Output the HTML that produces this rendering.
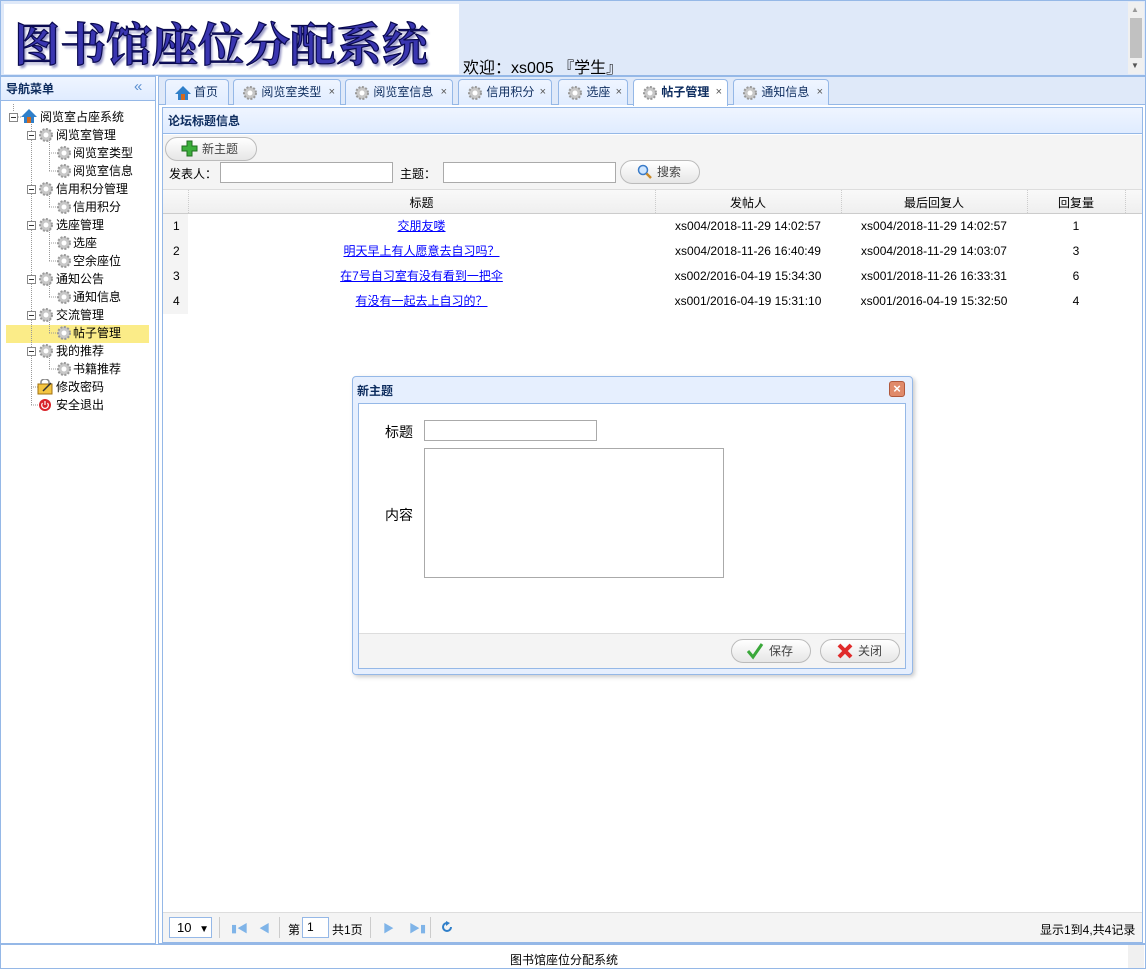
<!DOCTYPE html>
<html><head><meta charset="utf-8"><style>
*{margin:0;padding:0;box-sizing:border-box}
body{width:1146px;height:969px;position:relative;overflow:hidden;background:#fff;font-family:"Liberation Sans","Microsoft YaHei","Noto Sans CJK SC",sans-serif;font-size:12px;color:#000}
.a{position:absolute}
.gear{display:inline-block;width:16px;height:16px;vertical-align:middle}
.tab{position:absolute;top:79px;height:26px;border:1px solid #95b8e7;border-bottom:none;border-radius:4px 4px 0 0;background:linear-gradient(#eff5ff,#e0ecff);line-height:24px;padding-left:8px;color:#0e2d5f;font-size:12px}
.tab .x{position:absolute;right:5px;top:0;color:#555;font-size:11px}
.row{position:absolute;left:164px;width:962px;height:25px;line-height:25px}
.btn{position:absolute;height:24px;border:1px solid #bbb;border-radius:12px;background:linear-gradient(#fff,#e6e6e6);line-height:22px;color:#444}
.bx{position:absolute;width:9px;height:9px;border:1px solid #888;background:linear-gradient(#333,#333) center/5px 1px no-repeat #fff}
.tr{position:absolute;line-height:18px;white-space:nowrap}
</style></head><body>
<!-- header -->
<div class="a" style="left:0;top:0;width:1146px;height:76px;background:#dfe9f9;border:1px solid #95b8e7"></div>
<div class="a" style="left:4px;top:4px;width:455px;height:70px;background:#fff"></div>
<div class="a" style="left:14px;top:9px;font-size:46px;font-family:'Noto Serif CJK SC','Noto Sans CJK SC',serif;font-weight:bold;color:#3a36b0;-webkit-text-stroke:1.2px #0a0a50;text-shadow:2px 3px 2px #9a9ac8">图书馆座位分配系统</div>
<div class="a" style="left:463px;top:54px;font-size:16px;color:#000">欢迎：xs005 『学生』</div>
<div class="a" style="left:1128px;top:2px;width:16px;height:72px;background:#f0f0f0"></div>
<div class="a" style="left:1130px;top:18px;width:12px;height:40px;background:#c1c1c1"></div>
<div class="a" style="left:1131px;top:5px;font-size:8px;color:#999">▲</div>
<div class="a" style="left:1131px;top:61px;font-size:8px;color:#555">▼</div>

<!-- left panel -->
<div class="a" style="left:0;top:76px;width:156px;height:868px;border:1px solid #95b8e7;background:#fff"></div>
<div class="a" style="left:1px;top:77px;width:154px;height:24px;background:linear-gradient(#eff5ff,#e0ecff);border-bottom:1px solid #95b8e7;line-height:24px;padding-left:5px;font-weight:bold;color:#0e2d5f">导航菜单</div>
<div class="a" style="left:134px;top:78px;color:#5a8fd0;font-size:15px">«</div>
<div class="a" style="left:6px;top:325px;width:143px;height:18px;background:#fbec88"></div>
<svg class="a" style="left:0;top:0" width="160" height="420">
<g stroke="#999" stroke-dasharray="1,1" fill="none">
<path d="M13.5 104V112M31.5 122V405M49.5 140V171M49.5 194V207M49.5 230V261M49.5 284V297M49.5 320V333M49.5 356V369"/>
<path d="M18 117H22M49 153H56M49 171H56M49 207H56M49 243H56M49 261H56M49 297H56M49 333H56M49 369H56M31 387H38M31 405H38"/>
</g>
</svg>
<div class="bx" style="left:9px;top:113px"></div>
<svg class="a" style="left:20px;top:108px" width="18" height="16"><path d="M9 1L1 9h3v6h10V9h3z" fill="#2f7fc9"/><rect x="7" y="9" width="4" height="6" fill="#d2691e"/></svg>
<div class="tr" style="left:40px;top:108px">阅览室占座系统</div>

<div class="bx" style="left:27px;top:131px"></div><div class="bx" style="left:27px;top:185px"></div><div class="bx" style="left:27px;top:221px"></div><div class="bx" style="left:27px;top:275px"></div><div class="bx" style="left:27px;top:311px"></div><div class="bx" style="left:27px;top:347px"></div>

<div class="a" style="left:38px;top:127px"><svg class="gear" viewBox="0 0 16 16"><circle cx="8" cy="8" r="6" fill="#c8c8c8" stroke="#999" stroke-width="2" stroke-dasharray="2,1.5"/><circle cx="8" cy="8" r="2.5" fill="#fff"/></svg></div><div class="tr" style="left:56px;top:126px">阅览室管理</div>
<div class="a" style="left:56px;top:145px"><svg class="gear" viewBox="0 0 16 16"><circle cx="8" cy="8" r="6" fill="#c8c8c8" stroke="#999" stroke-width="2" stroke-dasharray="2,1.5"/><circle cx="8" cy="8" r="2.5" fill="#fff"/></svg></div><div class="tr" style="left:73px;top:144px">阅览室类型</div>
<div class="a" style="left:56px;top:163px"><svg class="gear" viewBox="0 0 16 16"><circle cx="8" cy="8" r="6" fill="#c8c8c8" stroke="#999" stroke-width="2" stroke-dasharray="2,1.5"/><circle cx="8" cy="8" r="2.5" fill="#fff"/></svg></div><div class="tr" style="left:73px;top:162px">阅览室信息</div>
<div class="a" style="left:38px;top:181px"><svg class="gear" viewBox="0 0 16 16"><circle cx="8" cy="8" r="6" fill="#c8c8c8" stroke="#999" stroke-width="2" stroke-dasharray="2,1.5"/><circle cx="8" cy="8" r="2.5" fill="#fff"/></svg></div><div class="tr" style="left:56px;top:180px">信用积分管理</div>
<div class="a" style="left:56px;top:199px"><svg class="gear" viewBox="0 0 16 16"><circle cx="8" cy="8" r="6" fill="#c8c8c8" stroke="#999" stroke-width="2" stroke-dasharray="2,1.5"/><circle cx="8" cy="8" r="2.5" fill="#fff"/></svg></div><div class="tr" style="left:73px;top:198px">信用积分</div>
<div class="a" style="left:38px;top:217px"><svg class="gear" viewBox="0 0 16 16"><circle cx="8" cy="8" r="6" fill="#c8c8c8" stroke="#999" stroke-width="2" stroke-dasharray="2,1.5"/><circle cx="8" cy="8" r="2.5" fill="#fff"/></svg></div><div class="tr" style="left:56px;top:216px">选座管理</div>
<div class="a" style="left:56px;top:235px"><svg class="gear" viewBox="0 0 16 16"><circle cx="8" cy="8" r="6" fill="#c8c8c8" stroke="#999" stroke-width="2" stroke-dasharray="2,1.5"/><circle cx="8" cy="8" r="2.5" fill="#fff"/></svg></div><div class="tr" style="left:73px;top:234px">选座</div>
<div class="a" style="left:56px;top:253px"><svg class="gear" viewBox="0 0 16 16"><circle cx="8" cy="8" r="6" fill="#c8c8c8" stroke="#999" stroke-width="2" stroke-dasharray="2,1.5"/><circle cx="8" cy="8" r="2.5" fill="#fff"/></svg></div><div class="tr" style="left:73px;top:252px">空余座位</div>
<div class="a" style="left:38px;top:271px"><svg class="gear" viewBox="0 0 16 16"><circle cx="8" cy="8" r="6" fill="#c8c8c8" stroke="#999" stroke-width="2" stroke-dasharray="2,1.5"/><circle cx="8" cy="8" r="2.5" fill="#fff"/></svg></div><div class="tr" style="left:56px;top:270px">通知公告</div>
<div class="a" style="left:56px;top:289px"><svg class="gear" viewBox="0 0 16 16"><circle cx="8" cy="8" r="6" fill="#c8c8c8" stroke="#999" stroke-width="2" stroke-dasharray="2,1.5"/><circle cx="8" cy="8" r="2.5" fill="#fff"/></svg></div><div class="tr" style="left:73px;top:288px">通知信息</div>
<div class="a" style="left:38px;top:307px"><svg class="gear" viewBox="0 0 16 16"><circle cx="8" cy="8" r="6" fill="#c8c8c8" stroke="#999" stroke-width="2" stroke-dasharray="2,1.5"/><circle cx="8" cy="8" r="2.5" fill="#fff"/></svg></div><div class="tr" style="left:56px;top:306px">交流管理</div>
<div class="a" style="left:56px;top:325px"><svg class="gear" viewBox="0 0 16 16"><circle cx="8" cy="8" r="6" fill="#c8c8c8" stroke="#999" stroke-width="2" stroke-dasharray="2,1.5"/><circle cx="8" cy="8" r="2.5" fill="#fff"/></svg></div><div class="tr" style="left:73px;top:324px">帖子管理</div>
<div class="a" style="left:38px;top:343px"><svg class="gear" viewBox="0 0 16 16"><circle cx="8" cy="8" r="6" fill="#c8c8c8" stroke="#999" stroke-width="2" stroke-dasharray="2,1.5"/><circle cx="8" cy="8" r="2.5" fill="#fff"/></svg></div><div class="tr" style="left:56px;top:342px">我的推荐</div>
<div class="a" style="left:56px;top:361px"><svg class="gear" viewBox="0 0 16 16"><circle cx="8" cy="8" r="6" fill="#c8c8c8" stroke="#999" stroke-width="2" stroke-dasharray="2,1.5"/><circle cx="8" cy="8" r="2.5" fill="#fff"/></svg></div><div class="tr" style="left:73px;top:360px">书籍推荐</div>
<svg class="a" style="left:37px;top:379px" width="18" height="16"><rect x="1" y="5" width="14" height="10" fill="#f4c542" stroke="#a07010"/><path d="M4 5V3a4 3 0 0 1 8 0v2" fill="none" stroke="#888" stroke-width="1.5"/><path d="M6 12l8-8" stroke="#333" stroke-width="1.5"/></svg><div class="tr" style="left:56px;top:378px">修改密码</div>
<svg class="a" style="left:38px;top:398px" width="14" height="14"><circle cx="7" cy="7" r="6" fill="#d8232a"/><path d="M7 3v4M4.5 5a3.3 3.3 0 1 0 5 0" stroke="#fff" fill="none" stroke-width="1.2"/></svg><div class="tr" style="left:56px;top:396px">安全退出</div>

<!-- main tabs area -->
<div class="a" style="left:158px;top:76px;width:988px;height:868px;border:1px solid #95b8e7;background:#fff"></div>
<div class="a" style="left:159px;top:77px;width:986px;height:28px;background:#dfe9f9;border-bottom:1px solid #95b8e7"></div>
<div class="tab" style="left:165px;width:64px"><svg class="a" style="left:8px;top:5px" width="18" height="16"><path d="M9 1L1 9h3v6h10V9h3z" fill="#2f7fc9"/><rect x="7" y="9" width="4" height="6" fill="#d2691e"/></svg><span style="margin-left:20px">首页</span></div>
<div class="tab" style="left:233px;width:108px"><svg class="gear" viewBox="0 0 16 16"><circle cx="8" cy="8" r="6" fill="#c8c8c8" stroke="#999" stroke-width="2" stroke-dasharray="2,1.5"/><circle cx="8" cy="8" r="2.5" fill="#fff"/></svg> 阅览室类型<span class="x">×</span></div>
<div class="tab" style="left:345px;width:108px"><svg class="gear" viewBox="0 0 16 16"><circle cx="8" cy="8" r="6" fill="#c8c8c8" stroke="#999" stroke-width="2" stroke-dasharray="2,1.5"/><circle cx="8" cy="8" r="2.5" fill="#fff"/></svg> 阅览室信息<span class="x">×</span></div>
<div class="tab" style="left:458px;width:94px"><svg class="gear" viewBox="0 0 16 16"><circle cx="8" cy="8" r="6" fill="#c8c8c8" stroke="#999" stroke-width="2" stroke-dasharray="2,1.5"/><circle cx="8" cy="8" r="2.5" fill="#fff"/></svg> 信用积分<span class="x">×</span></div>
<div class="tab" style="left:558px;width:70px"><svg class="gear" viewBox="0 0 16 16"><circle cx="8" cy="8" r="6" fill="#c8c8c8" stroke="#999" stroke-width="2" stroke-dasharray="2,1.5"/><circle cx="8" cy="8" r="2.5" fill="#fff"/></svg> 选座<span class="x">×</span></div>
<div class="tab" style="left:633px;width:95px;background:#fff;height:27px;font-weight:bold"><svg class="gear" viewBox="0 0 16 16"><circle cx="8" cy="8" r="6" fill="#c8c8c8" stroke="#999" stroke-width="2" stroke-dasharray="2,1.5"/><circle cx="8" cy="8" r="2.5" fill="#fff"/></svg> 帖子管理<span class="x" style="font-weight:normal">×</span></div>
<div class="tab" style="left:733px;width:96px"><svg class="gear" viewBox="0 0 16 16"><circle cx="8" cy="8" r="6" fill="#c8c8c8" stroke="#999" stroke-width="2" stroke-dasharray="2,1.5"/><circle cx="8" cy="8" r="2.5" fill="#fff"/></svg> 通知信息<span class="x">×</span></div>

<!-- content panel -->
<div class="a" style="left:162px;top:107px;width:981px;height:836px;border:1px solid #95b8e7"></div>
<div class="a" style="left:163px;top:108px;width:979px;height:26px;background:linear-gradient(#eff5ff,#e0ecff);border-bottom:1px solid #95b8e7;line-height:26px;padding-left:5px;font-weight:bold;color:#0e2d5f">论坛标题信息</div>
<div class="a" style="left:163px;top:135px;width:979px;height:54px;background:#f4f4f4"></div>
<div class="btn" style="left:165px;top:137px;width:92px;padding-left:36px">新主题</div>
<svg class="a" style="left:181px;top:140px" width="17" height="17"><path d="M6 1h5v5h5v5h-5v5H6v-5H1V6h5z" fill="#3cae3c" stroke="#1e6e1e"/></svg>
<div class="a" style="left:169px;top:165px">发表人：</div>
<div class="a" style="left:220px;top:162px;width:173px;height:21px;border:1px solid #aaa;background:#fff"></div>
<div class="a" style="left:400px;top:165px">主题：</div>
<div class="a" style="left:443px;top:162px;width:173px;height:21px;border:1px solid #aaa;background:#fff"></div>
<div class="btn" style="left:620px;top:160px;width:80px;padding-left:36px">搜索</div>
<svg class="a" style="left:637px;top:164px" width="16" height="16"><circle cx="6" cy="6" r="4.5" fill="#cfe6ff" stroke="#3a7bc8" stroke-width="1.5"/><path d="M9.5 9.5L14 14" stroke="#c98a2a" stroke-width="2.5"/></svg>
<!-- grid header -->
<div class="a" style="left:163px;top:189px;width:979px;height:25px;background:linear-gradient(#f9f9f9,#efefef);border-top:1px solid #ddd;border-bottom:1px solid #ccc"></div>
<div class="a" style="left:188px;top:190px;height:23px;border-left:1px dotted #ccc"></div>
<div class="a" style="left:655px;top:190px;height:23px;border-left:1px dotted #ccc"></div>
<div class="a" style="left:841px;top:190px;height:23px;border-left:1px dotted #ccc"></div>
<div class="a" style="left:1027px;top:190px;height:23px;border-left:1px dotted #ccc"></div>
<div class="a" style="left:1125px;top:190px;height:23px;border-left:1px dotted #ccc"></div>
<div class="a" style="left:188px;top:194px;width:467px;text-align:center">标题</div>
<div class="a" style="left:655px;top:194px;width:186px;text-align:center">发帖人</div>
<div class="a" style="left:841px;top:194px;width:186px;text-align:center">最后回复人</div>
<div class="a" style="left:1027px;top:194px;width:98px;text-align:center">回复量</div>
<!-- rows -->
<div class="a" style="left:163px;top:214px;width:25px;height:100px;background:#f4f4f4"></div>
<div class="row" style="top:214px"><span class="a" style="left:9px">1</span><a class="a" style="left:24px;width:467px;text-align:center;color:#00f;text-decoration:underline">交朋友喽</a><span class="a" style="left:491px;width:186px;text-align:center">xs004/2018-11-29 14:02:57</span><span class="a" style="left:677px;width:186px;text-align:center">xs004/2018-11-29 14:02:57</span><span class="a" style="left:863px;width:98px;text-align:center">1</span></div>
<div class="row" style="top:239px"><span class="a" style="left:9px">2</span><a class="a" style="left:24px;width:467px;text-align:center;color:#00f;text-decoration:underline">明天早上有人愿意去自习吗？</a><span class="a" style="left:491px;width:186px;text-align:center">xs004/2018-11-26 16:40:49</span><span class="a" style="left:677px;width:186px;text-align:center">xs004/2018-11-29 14:03:07</span><span class="a" style="left:863px;width:98px;text-align:center">3</span></div>
<div class="row" style="top:264px"><span class="a" style="left:9px">3</span><a class="a" style="left:24px;width:467px;text-align:center;color:#00f;text-decoration:underline">在7号自习室有没有看到一把伞</a><span class="a" style="left:491px;width:186px;text-align:center">xs002/2016-04-19 15:34:30</span><span class="a" style="left:677px;width:186px;text-align:center">xs001/2018-11-26 16:33:31</span><span class="a" style="left:863px;width:98px;text-align:center">6</span></div>
<div class="row" style="top:289px"><span class="a" style="left:9px">4</span><a class="a" style="left:24px;width:467px;text-align:center;color:#00f;text-decoration:underline">有没有一起去上自习的？</a><span class="a" style="left:491px;width:186px;text-align:center">xs001/2016-04-19 15:31:10</span><span class="a" style="left:677px;width:186px;text-align:center">xs001/2016-04-19 15:32:50</span><span class="a" style="left:863px;width:98px;text-align:center">4</span></div>

<!-- pager -->
<div class="a" style="left:163px;top:912px;width:979px;height:30px;background:#f4f4f4;border-top:1px solid #ddd"></div>
<div class="a" style="left:169px;top:917px;width:43px;height:21px;border:1px solid #95b8e7;background:#fff;line-height:19px;padding-left:7px;font-size:13px">10 <span style="font-size:10px;margin-left:4px">▼</span></div>
<div class="a" style="left:219px;top:917px;height:21px;border-left:1px solid #ccc"></div>
<div class="a" style="left:231px;top:920px;color:#7fb4e8;font-size:11px">▮◀</div>
<div class="a" style="left:259px;top:920px;color:#7fb4e8;font-size:11px">◀</div>
<div class="a" style="left:279px;top:917px;height:21px;border-left:1px solid #ccc"></div>
<div class="a" style="left:288px;top:921px">第</div>
<div class="a" style="left:302px;top:917px;width:27px;height:21px;border:1px solid #95b8e7;background:#fff;padding-left:4px;line-height:19px">1</div>
<div class="a" style="left:332px;top:921px">共1页</div>
<div class="a" style="left:370px;top:917px;height:21px;border-left:1px solid #ccc"></div>
<div class="a" style="left:383px;top:920px;color:#7fb4e8;font-size:11px">▶</div>
<div class="a" style="left:409px;top:920px;color:#7fb4e8;font-size:11px">▶▮</div>
<div class="a" style="left:430px;top:917px;height:21px;border-left:1px solid #ccc"></div>
<svg class="a" style="left:441px;top:921px" width="12" height="12"><path d="M10 6A4 4 0 1 1 6 2" fill="none" stroke="#2f7fc9" stroke-width="2"/><path d="M5 0l4 2-4 3z" fill="#2f7fc9"/></svg>
<div class="a" style="left:1040px;top:921px">显示1到4,共4记录</div>

<!-- footer -->
<div class="a" style="left:0;top:944px;width:1146px;height:25px;border:1px solid #95b8e7;background:#fff"></div>
<div class="a" style="left:0;top:951px;width:1128px;text-align:center">图书馆座位分配系统</div>
<div class="a" style="left:1128px;top:945px;width:16px;height:23px;background:#f0f0f0"></div>

<!-- dialog -->
<div class="a" style="left:352px;top:376px;width:561px;height:299px;border:1px solid #95b8e7;border-radius:4px;background:#e6effe;box-shadow:2px 2px 4px #ccc"></div>
<div class="a" style="left:357px;top:382px;font-weight:bold;color:#0e2d5f">新主题</div>
<div class="a" style="left:889px;top:381px;width:16px;height:16px;border-radius:3px;background:#e08a6a;border:1px solid #b0583c;color:#fff;text-align:center;line-height:13px;font-weight:bold;font-size:13px">×</div>
<div class="a" style="left:358px;top:403px;width:548px;height:266px;border:1px solid #95b8e7;background:#fff"></div>
<div class="a" style="left:385px;top:422px;font-size:14px">标题</div>
<div class="a" style="left:424px;top:420px;width:173px;height:21px;border:1px solid #aaa"></div>
<div class="a" style="left:385px;top:505px;font-size:14px">内容</div>
<div class="a" style="left:424px;top:448px;width:300px;height:130px;border:1px solid #aaa"></div>
<div class="a" style="left:359px;top:633px;width:546px;height:35px;background:#f4f4f4;border-top:1px solid #ddd"></div>
<div class="btn" style="left:731px;top:639px;width:80px;padding-left:37px">保存</div>
<svg class="a" style="left:746px;top:642px" width="18" height="18"><path d="M2 9l5 6L16 2" fill="none" stroke="#3aa83a" stroke-width="3"/></svg>
<div class="btn" style="left:820px;top:639px;width:80px;padding-left:37px">关闭</div>
<svg class="a" style="left:836px;top:642px" width="18" height="18"><path d="M3 3L15 15M15 3L3 15" stroke="#e02a2a" stroke-width="4"/></svg>
</body></html>
